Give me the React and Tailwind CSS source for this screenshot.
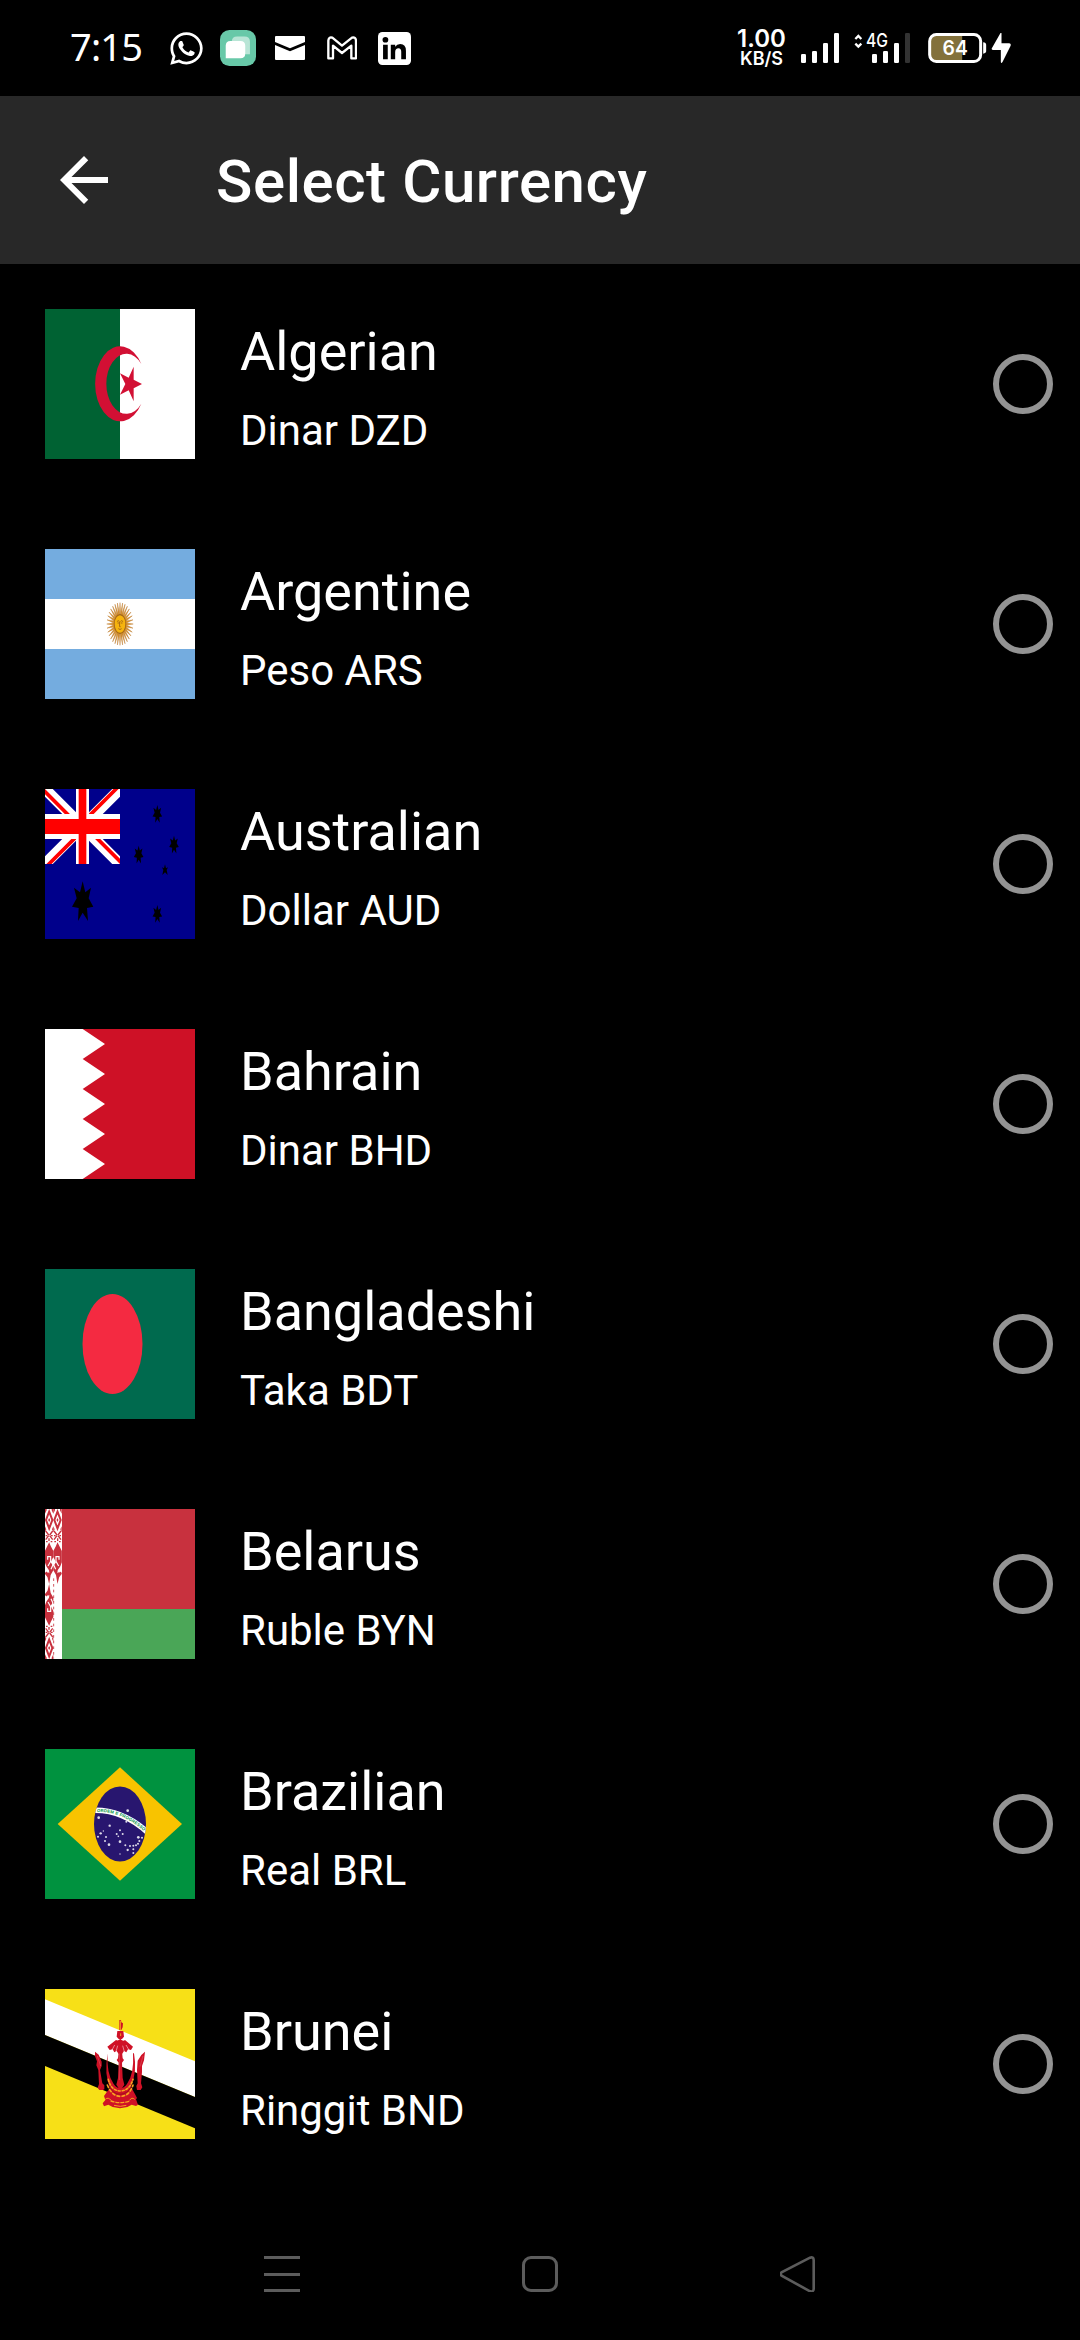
import React from "react";
import { FaWhatsapp } from "react-icons/fa";

const flagClass = "block h-[150px] w-[150px] shrink-0";

function AlgeriaFlag() {
  return (
    <svg viewBox="45 42 450 450" className={flagClass}>
      <path fill="#fff" d="M270 42h225v450H270z" />
      <path fill="#006233" d="M45 42h225v450H45z" />
      <path
        fill="#d21034"
        d="M334 207A75 112.500 0 1 0 334 326A60 90 0 1 1 334 207z"
      />
      <path fill="#d21034" d="M336 267l-25-13V215l-15 33.500L270 235l16 32-16 32 26-13.500 15 33.500v-39z" />
    </svg>
  );
}

function ArgentinaFlag() {
  const rays = Array.from({ length: 32 }, (_, i) => (i * 360) / 32);
  return (
    <svg viewBox="30 27 450 450" className={flagClass}>
      <path fill="#74acdf" d="M30 27h450v450H30z" />
      <path fill="#fff" d="M30 177h450v150H30z" />
      <g transform="translate(255 252) scale(.62 1)">
        {rays.map((a) => (
          <path key={a} d="M-3.500-26L0-64 3.500-26z" fill="#d9962f" stroke="#b9762b" strokeWidth="1.500" transform={`rotate(${a})`} />
        ))}
        <circle r="28" fill="#f6b40e" stroke="#a0651a" strokeWidth="4" />
        <path d="M-15-7q7-6 13 0M15-7q-7-6-13 0M-12-3h8M4-3h8M-2-6v14h5M-8 14q8 5 16 0" fill="none" stroke="#96591a" strokeWidth="3" />
      </g>
    </svg>
  );
}

const sevenPointStar =
  "M0-60L8-27 25-41 18-9 32 16 13 20 16 59 0 34-14 59-12 20-32 16-18-9-26-41-8-27z";

function AustraliaFlag() {
  return (
    <svg viewBox="30 27 450 450" className={flagClass}>
      <path fill="#00008b" d="M30 27h450v450H30z" />
      <svg x="30" y="27" width="225" height="225" viewBox="0 0 225 225">
        <path stroke="#fff" strokeWidth="33" d="M0 0l225 225M225 0L0 225" />
        <path
          stroke="#f00"
          strokeWidth="11"
          d="M-4 4L109 117M217-4L104 109M8 229L121 116M229 221L116 108"
        />
        <path fill="#fff" d="M93 0h39v225H93zM0 75h225v75H0z" />
        <path fill="#f00" d="M101 0h23v225h-23zM0 90h225v45H0z" />
      </svg>
      <path d={sevenPointStar} transform="translate(143 364)" />
      <path d={sevenPointStar} transform="translate(367 102) scale(.45)" />
      <path d={sevenPointStar} transform="translate(417 194) scale(.45)" />
      <path d={sevenPointStar} transform="translate(311 224) scale(.45)" />
      <path d={sevenPointStar} transform="translate(367 402) scale(.45)" />
      <path d="M0-17l3 12 6-3-4 8 3 15-8-8-8 8 3-15-4-8 6 3z" transform="translate(390 270)" />
    </svg>
  );
}

function BahrainFlag() {
  return (
    <svg viewBox="30 27 450 450" className={flagClass}>
      <path fill="#ce1126" d="M30 27h450v450H30z" />
      <path fill="#fff" d="M30 27h113l67 45-67 45 67 45-67 45 67 45-67 45 67 45-67 45 67 45-67 45H30z" />
    </svg>
  );
}

function BangladeshFlag() {
  return (
    <svg viewBox="0 0 150 150" className={flagClass}>
      <path fill="#006a4e" d="M0 0h150v150H0z" />
      <ellipse cx="67.500" cy="75" rx="30" ry="50" fill="#f42a41" />
    </svg>
  );
}

function BelarusMotif() {
  return (
    <g>
      <path fill="none" stroke="#c8313e" strokeWidth="6" d="M12.500 8L22 33 12.500 58 3 33z" />
      <path fill="#c8313e" d="M12.500 27l3 6-3 6-3-6zM0 0h5v4l-5 10zM25 0h-5v4l5 10zM0 52l4 9-4 9zM25 52l-4 9 4 9z" />
      <path
        fill="none"
        stroke="#c8313e"
        strokeWidth="4"
        d="M2 66l9 12M23 66l-9 12M2 92l9-12M23 92l-9-12M2 80h5M18 80h5M3 98h5M17 98h5M12 88v8"
      />
      <path
        fill="#c8313e"
        d="M12.500 100l5 12 7.500 14v18l-8 16 8 12v12l-8 14-4.500 27-5-20-7.500-10v-4l6-4 7 6-1-9-8-12-4.500-12V126z"
      />
      <path fill="none" stroke="#fff" strokeWidth="3.500" d="M8 152v-9h9v14l-8 14M25 165l-7 16M0 178l9 12" />
    </g>
  );
}

function BelarusFlag() {
  return (
    <svg viewBox="30 27 450 450" className={flagClass}>
      <path fill="#fff" d="M30 27h51v450H30z" />
      <path fill="#c8313e" d="M81 27h399v300H81z" />
      <path fill="#4aa657" d="M81 327h399v150H81z" />
      <g transform="translate(30 27)">
        <BelarusMotif />
      </g>
      <g transform="translate(80 27) scale(-1 1)">
        <BelarusMotif />
      </g>
      <g transform="translate(30 477) scale(1 -1)">
        <BelarusMotif />
      </g>
      <path stroke="#c8313e" strokeWidth="2.500" strokeDasharray="8 9" d="M56 235v240" />
    </svg>
  );
}

const brazilStars = [
  [278, 212, 4], [274, 245, 3], [191, 233, 4], [224, 257, 3.5], [197, 280, 3.5], [205, 273, 2],
  [189, 290, 3], [213, 291, 3], [210, 303, 3], [222, 314, 4], [255, 271, 3], [245, 282, 3],
  [263, 282, 3], [250, 289, 2.5], [255, 305, 4], [271, 316, 3], [285, 318, 3], [278, 330, 3.5],
  [295, 317, 3], [295, 328, 3], [295, 339, 3], [303, 316, 3], [310, 292, 4], [321, 293, 3],
  [313, 303, 3], [309, 311, 3], [255, 342, 2],
];

function BrazilFlag() {
  return (
    <svg viewBox="30 27 450 450" className={flagClass}>
      <clipPath id="globe">
        <ellipse cx="255" cy="252" rx="78" ry="112.500" />
      </clipPath>
      <path fill="#00923f" d="M30 27h450v450H30z" />
      <path fill="#f8c300" d="M255 82l186 170-186 170L68 252z" />
      <ellipse cx="255" cy="252" rx="78" ry="112.500" fill="#28166f" />
      <g clipPath="url(#globe)">
        <path fill="none" stroke="#fff" strokeWidth="17" d="M172 211Q262 207 340 279" />
        <path id="motto" fill="none" d="M186 216Q262 213 332 278" />
        <text fill="#00923f" fontSize="13" fontWeight="700" fontFamily="Liberation Sans, sans-serif">
          <textPath href="#motto" textLength="156">ORDEM E PROGRESSO</textPath>
        </text>
        {brazilStars.map(([x, y, r]) => (
          <circle key={`${x}-${y}`} cx={x} cy={y} r={r} fill="#fff" fillOpacity=".85" />
        ))}
      </g>
    </svg>
  );
}

function BruneiFlag() {
  return (
    <svg viewBox="30 27 450 450" className={flagClass}>
      <path fill="#f7e017" d="M30 27h450v450H30z" />
      <path fill="#fff" d="M30 58l450 186v107L30 165z" />
      <path d="M30 165l450 186v94L30 258z" />
      <g fill="#cf1126">
        <path d="M253 120h5l1 7 5 3-1 12-4 8h-6zM247 153h18l2 17-6 7h-10l-6-7z" />
        <path d="M256 176q8 10 14 4l24 20-6 10-9-2-5 9-7-4-6 9-5-5-5 5-6-9-7 4-5-9-9 2-7-10 26-20q6 4 13-4z" />
        <path d="M251 215h10l2 20 4 5-6 8 2 46 5 20-12 18-12-18 5-20 2-46-6-8 4-5z" />
        <path d="M180 215l11 9 9 21v13l-5 12 7 40 6 6v12l-5 2h-10l-5-7 4-11-2-42-6-14 2-12-6-15z" />
        <path d="M330 215l-3 26-6 17v18l-3 34 4 12-5 8h-11l-2-12 4-8-2-40 2-28 11-17z" />
        <path d="M218 220q-4 62 18 92 20 26 40 0 22-30 18-92l3 0q10 55-9 100l13 24 5 10-3 4 6 16-6 4-13-4-13 7-22 4-22-4-13-7-13 5-4-9 8-10-4-12 10-14 8-10q-18-40-7-104z" />
      </g>
      <g fill="none" stroke="#f9a320" strokeWidth="5" strokeLinecap="round">
        <path strokeDasharray="6 6" d="M220 298q8 34 36 35 28-1 38-35" />
        <path strokeDasharray="8 7" d="M217 315q14 34 39 34 27 0 38-34" />
        <path strokeDasharray="9 6" d="M228 363q28 10 56 0" strokeWidth="4" />
      </g>
      <g fill="none" stroke="#f7a01c" strokeWidth="3">
        <path d="M256 122v30M257 160v8M237 376q19 6 37 0M211 358q9-8 17 3M299 358q-9-8-15 3" />
      </g>
      <path d="M224 320q9 22 32 23 24-2 32-23" fill="none" stroke="#9f0d1e" strokeWidth="3" />
      <path d="M230 212l9-17M243 215l5-18M268 215l-5-18M282 210l-9-15" stroke="#fff" strokeWidth="1.500" />
      <path d="M253 220v80M187 228l10 30M324 228l-9 32" stroke="#fff" strokeOpacity=".35" strokeWidth="1.500" fill="none" />
    </svg>
  );
}

const currencies = [
  { name: "Algerian", unit: "Dinar DZD", Flag: AlgeriaFlag },
  { name: "Argentine", unit: "Peso ARS", Flag: ArgentinaFlag },
  { name: "Australian", unit: "Dollar AUD", Flag: AustraliaFlag },
  { name: "Bahrain", unit: "Dinar BHD", Flag: BahrainFlag },
  { name: "Bangladeshi", unit: "Taka BDT", Flag: BangladeshFlag },
  { name: "Belarus", unit: "Ruble BYN", Flag: BelarusFlag },
  { name: "Brazilian", unit: "Real BRL", Flag: BrazilFlag },
  { name: "Brunei", unit: "Ringgit BND", Flag: BruneiFlag },
];

function StatusBar() {
  return (
    <div className="flex h-24 items-center justify-between pl-[70px] pr-[69px] font-['Inter',sans-serif] text-white">
      <div className="flex items-center">
        <span className="mb-1 w-[98px] whitespace-nowrap font-['Noto_Sans',sans-serif] text-[38px] leading-none tracking-[-0.8px]">7:15</span>
        <FaWhatsapp className="h-[37px] w-[37px]" />
        <svg viewBox="511 60 107 107" className="ml-[15px] h-9 w-9">
          <rect x="511" y="60" width="107" height="107" rx="28" fill="#68c8a8" />
          <path fill="#b9e5d6" d="M562 79h22q16 0 16 16v37h-54V95q0-16 16-16z" />
          <path fill="#fff" d="M542 93h30q14 0 14 14v23q0 14-14 14h-44v-37q0-14 14-14z" />
        </svg>
        <svg viewBox="675 78 90 72" className="ml-[19px] h-6 w-[30px]">
          <path fill="#fff" d="M678 78h84q3 0 3 3v15l-45 19-45-19V81q0-3 3-3zM675 105l45 19 45-19v42q0 3-3 3h-84q-3 0-3-3z" />
        </svg>
        <svg viewBox="831 77 90 72" className="ml-[22px] h-6 w-[30px]">
          <path
            fill="none"
            stroke="#fff"
            strokeWidth="7"
            strokeLinejoin="round"
            d="M835 91q1-12 12-9l29 24 30-24q11-3 12 9v53h-14v-38l-28 22-27-22v38h-14z"
          />
        </svg>
        <svg viewBox="984 66 98 98" className="ml-[21px] h-[33px] w-[33px]">
          <rect x="984" y="66" width="98" height="98" rx="13" fill="#fff" />
          <circle cx="1006" cy="89" r="8.500" />
          <path d="M999 104h14v43h-14zM1022 104h13v6q5-8 15-8 17 0 17 20v25h-14v-22q0-11-8-11-10 0-10 12v21h-13z" />
        </svg>
      </div>
      <div className="flex items-center">
        <div className="mt-[2px] flex w-[51px] flex-col items-center font-semibold">
          <span className="text-[24px] leading-[20px]">1.00</span>
          <span className="text-[18px] leading-[20px]">KB/S</span>
        </div>
        <svg viewBox="243 69 114 90" className="ml-[14px] h-[30px] w-[38px]" fill="#fff">
          <rect x="243" y="132" width="15" height="27" rx="4" />
          <rect x="276" y="123" width="15" height="36" rx="4" />
          <rect x="309" y="99" width="15" height="60" rx="4" />
          <rect x="342" y="69" width="15" height="90" rx="4" />
        </svg>
        <svg viewBox="402 69 168 90" className="ml-[15px] h-[30px] w-14 overflow-visible" fill="#fff">
          <path d="M406 87l9-9 9 9M406 101l9 9 9-9" fill="none" stroke="#fff" strokeWidth="7" />
          <text x="438" y="112" fontSize="56" fontWeight="500" fontFamily="Inter, sans-serif" textLength="66" lengthAdjust="spacingAndGlyphs">
            4G
          </text>
          <rect x="456" y="132" width="15" height="27" rx="4" />
          <rect x="489" y="123" width="15" height="36" rx="4" />
          <rect x="522" y="99" width="15" height="60" rx="4" />
          <rect x="555" y="69" width="15" height="90" rx="4" fill="#333" />
        </svg>
        <svg viewBox="624 69 248 90" className="ml-[18px] h-[30px] w-[83px]" fill="#fff">
          <path fill="#83713b" d="M646 77h80v74h-80q-15 0-15-15V92q0-15 15-15z" />
          <rect x="628.500" y="73.500" width="153" height="81" rx="20" fill="none" stroke="#fff" strokeWidth="9" />
          <path d="M789 97q9 1 9 8v18q0 7-9 8z" />
          <text x="705" y="136" textAnchor="middle" fontSize="62" fontWeight="600" fontFamily="Inter, sans-serif" textLength="76" lengthAdjust="spacingAndGlyphs">
            64
          </text>
          <path d="M841 69l-26 46q-2 4 3 5h24v36q1 6 5 0l24-48q3-7-4-8h-23V70q-1-4-3-1z" />
        </svg>
      </div>
    </div>
  );
}

function NavBar() {
  return (
    <div className="flex h-[156px] items-center justify-between px-[264px] pt-6">
      <div className="flex h-9 w-9 flex-col justify-between">
        <div className="h-[3px] bg-[#5c5c5c]" />
        <div className="h-[3px] bg-[#5c5c5c]" />
        <div className="h-[3px] bg-[#5c5c5c]" />
      </div>
      <div className="h-9 w-9 rounded-[9px] border-[3px] border-[#5c5c5c]" />
      <svg viewBox="0 0 36 36" className="h-9 w-9" fill="none" stroke="#5c5c5c" strokeWidth="2.600">
        <path d="M2 16Q-.5 18 2 20L30 35.300Q33.500 36 33.700 33V4Q33.500 .500 30 1.700z" />
      </svg>
    </div>
  );
}

export default function App() {
  return (
    <div className="flex h-[2340px] w-[1080px] flex-col overflow-hidden bg-black font-['Roboto',sans-serif] text-white">
      <StatusBar />
      <header className="flex h-[168px] items-center bg-[#282828] pl-12">
        <svg viewBox="0 0 24 24" className="h-[72px] w-[72px]" fill="#fff">
          <path d="M20 11H7.830l5.590-5.590L12 4l-8 8 8 8 1.410-1.410L7.830 13H20z" />
        </svg>
        <h1 className="ml-24 mt-1 text-[60px] font-medium leading-[70px] tracking-[0.58px]">Select Currency</h1>
      </header>
      <main>
        {currencies.map(({ name, unit, Flag }) => (
          <div key={name} className="flex h-60 items-center pl-[45px] pr-[27px]">
            <Flag />
            <div className="ml-[45px] flex flex-1 flex-col pt-[11px]">
              <span className="text-[54px] leading-[72px]">{name}</span>
              <span className="mt-[11px] text-[42px] leading-[64px]">{unit}</span>
            </div>
            <div className="h-[60px] w-[60px] rounded-full border-[6px] border-[#939393]" />
          </div>
        ))}
      </main>
      <NavBar />
    </div>
  );
}
